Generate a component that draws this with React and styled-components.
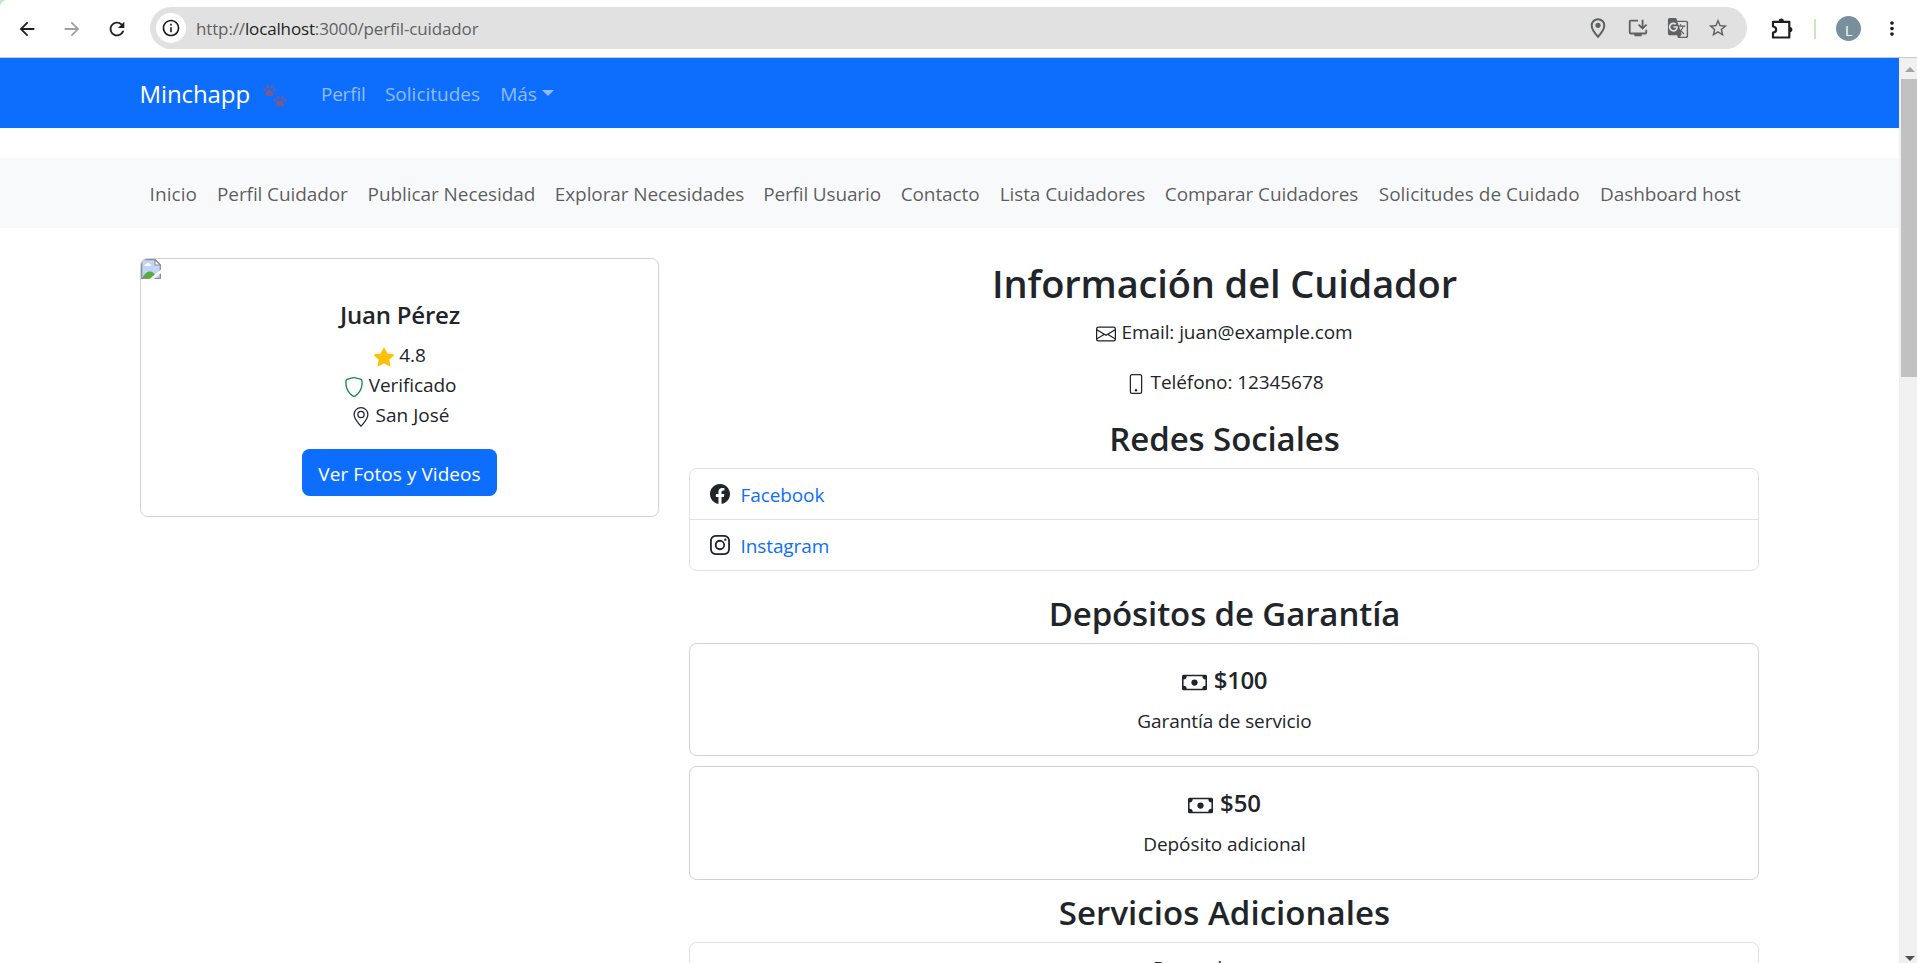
import React from 'react';
import styled, { createGlobalStyle, css } from 'styled-components';
import { BsStarFill, BsShield, BsGeoAlt, BsEnvelope, BsPhone, BsFacebook, BsInstagram, BsCash } from 'react-icons/bs';
import { MdArrowBack, MdArrowForward, MdRefresh, MdOutlineInfo, MdInstallDesktop, MdGTranslate, MdStarBorder, MdMoreVert } from 'react-icons/md';

const Global = createGlobalStyle`
  * { box-sizing: border-box; }
  body {
    margin: 0;
    overflow: hidden;
    background: #fff;
    color: #212529;
    font: 400 19px/30px "Open Sans", "Noto Sans", sans-serif;
    letter-spacing: -0.1px;
  }
`;

const Window = styled.div`
  display: flex;
  flex-direction: column;
  height: 963px;
  overflow: hidden;
`;

/* browser toolbar */
const Toolbar = styled.header`
  flex: none;
  display: flex;
  align-items: center;
  height: 58px;
  padding: 0 14px 0 16px;
  border-bottom: 1px solid #c8cacd;
  background: radial-gradient(circle at 9px 9px, #fff 9px, #c6e9bd 10px) 0 0 / 9px 9px no-repeat #fff;
  color: #1f1f1f;
`;
const ToolIcon = styled.span`
  display: flex;
  justify-content: center;
  width: ${(p) => p.$w || 22}px;
  margin-right: ${(p) => p.$gap || 0}px;
  padding-left: ${(p) => p.$inset || 0}px;
  color: ${(p) => p.$color || 'inherit'};
  font-size: ${(p) => p.$size || 22}px;
`;
const Address = styled.div`
  flex: 1;
  display: flex;
  align-items: center;
  height: 42px;
  margin-top: -1px;
  padding: 0 18px 0 6px;
  border-radius: 21px;
  background: #e1e1e1;
`;
const SiteInfo = styled.span`
  display: grid;
  place-items: center;
  width: 30px;
  height: 30px;
  margin-right: 10px;
  border-radius: 50%;
  background: #fff;
  font-size: 20px;
`;
const Url = styled.span`
  flex: 1;
  padding-top: 1px;
  color: #5f6163;
  font-size: 17px;
  letter-spacing: -0.14px;
  b { color: #1f1f1f; font-weight: 400; }
`;
const Divider = styled.span`
  width: 2px;
  height: 20px;
  margin-right: 20px;
  background: #c6e9bd;
`;
const Avatar = styled.span`
  display: grid;
  place-items: center;
  width: 25px;
  height: 25px;
  margin-right: 20px;
  border-radius: 50%;
  background: #78909c;
  color: #fff;
  font-size: 14px;
`;

/* viewport and scrollbar */
const Viewport = styled.div`
  flex: 1;
  display: flex;
  min-height: 0;
`;
const Page = styled.div`
  flex: 1;
  overflow: hidden;
`;
const Scrollbar = styled.div`
  flex: none;
  display: flex;
  flex-direction: column;
  align-items: center;
  width: 18px;
  background: #f0f0f0;
`;
const Thumb = styled.div`
  align-self: flex-end;
  width: 16px;
  height: 298px;
  margin-bottom: auto;
  background: #c1c1c1;
`;
const ScrollArrow = styled.span`
  width: 0;
  height: 0;
  margin: ${(p) => (p.$down ? '0 0 2px 3px' : '9px 0 7px 3px')};
  border: 5px solid transparent;
  ${(p) => (p.$down
    ? css`border-top-color: #505050; border-bottom: 0;`
    : css`border-bottom-color: #a3a3a3; border-top: 0;`)}
`;

const Bar = styled.nav`
  height: 70px;
  margin-bottom: 30px;
  background: ${(p) => p.$bg};
`;
const Container = styled.div`
  display: flex;
  align-items: center;
  width: 1650px;
  height: 100%;
  margin: 0 auto;
  padding: 2px 15px 0;
`;
const Brand = styled.a`
  display: flex;
  align-items: center;
  width: 172.5px;
  color: #fff;
  font-size: 24px;
  letter-spacing: -0.1px;
  svg { margin: 5px 0 0 13px; }
`;
const NavLink = styled.a`
  display: flex;
  align-items: center;
  justify-content: center;
  width: ${(p) => p.$w}px;
  color: ${(p) => (p.$light ? 'rgba(255,255,255,.55)' : 'rgba(0,0,0,.65)')};
  letter-spacing: ${(p) => p.$ls ?? -0.1}px;
  white-space: nowrap;
`;
const Caret = styled.span`
  margin: -3px 0 0 5px;
  border: 6px solid transparent;
  border-top-color: currentColor;
  border-bottom: 0;
`;

const Columns = styled.main`
  display: grid;
  grid-template-columns: 519px 1070px;
  column-gap: 30px;
  align-items: start;
  width: 1619px;
  margin: 0 auto;
  text-align: center;
`;
const Card = styled.section`
  height: ${(p) => p.$h}px;
  margin-bottom: 10px;
  border: 1px solid #d0d1d2;
  border-radius: 7.5px;
`;
const CardBody = styled.div`
  padding: 20px;
`;
const MissingPhoto = styled.div`
  height: 20px;
  overflow: hidden;
  border-radius: 6px 0 0 0;
  line-height: 0;
  text-align: left;
`;
const Title = styled.h2`
  height: ${(p) => p.$h}px;
  margin: ${(p) => p.$top || 0}px 0 10px;
  padding: 1px 0 0 1px;
  font-size: ${(p) => p.$size}px;
  font-weight: 560;
  line-height: ${(p) => p.$h}px;
  letter-spacing: ${(p) => p.$ls || 0}px;
`;
const SectionTitle = styled(Title).attrs({ as: 'h3', $size: 33, $h: 42 })`
  padding-top: 2px;
`;
const Line = styled.p`
  height: 30px;
  margin: 0 0 ${(p) => p.$gap || 0}px;
  padding: ${(p) => (p.$low ? 2 : 1)}px 0 0 1px;
  letter-spacing: ${(p) => p.$ls ?? -0.08}px;
`;
const Glyph = styled.span`
  display: inline-block;
  width: ${(p) => p.$size || 20}px;
  height: ${(p) => p.$size || 20}px;
  margin-right: ${(p) => p.$gap ?? 5}px;
  color: ${(p) => p.$color || 'inherit'};
  font-size: ${(p) => p.$size || 20}px;
  line-height: 0;
  vertical-align: middle;
`;
const Button = styled.button`
  width: 195px;
  height: 47px;
  margin-top: 20px;
  padding: 2px 0 0;
  border: 0;
  border-radius: 7.5px;
  background: #0d6efd;
  color: #fff;
  font: inherit;
  letter-spacing: 0.05px;
  white-space: nowrap;
`;
const List = styled.ul`
  margin: 0;
  padding: 0;
  border: 1px solid #dee2e6;
  border-radius: 7.5px;
  list-style: none;
`;
const ListItem = styled.li`
  display: flex;
  align-items: center;
  justify-content: ${(p) => (p.$center ? 'center' : 'flex-start')};
  height: 50px;
  padding: 0 20px;
  & + & { height: 51px; border-top: 1px solid #dee2e6; }
`;
const Link = styled.a`
  padding-top: 2px;
  color: #0d6efd;
`;

const Paws = () => (
  <svg width="25" height="24" viewBox="0 0 25 24" fill="#735b93">
    {[[0, 0], [10.5, 10.5]].map(([x, y]) => (
      <g key={x} transform={`translate(${x} ${y}) scale(.93)`}>
        <ellipse cx="1.800" cy="5" rx="1.500" ry="1.800" />
        <ellipse cx="5" cy="2.200" rx="1.500" ry="1.800" />
        <ellipse cx="9.200" cy="2.200" rx="1.500" ry="1.800" />
        <ellipse cx="12.400" cy="5" rx="1.500" ry="1.800" />
        <path d="M7.100 5.200C4.500 5.200 2.600 8 2.800 10.200c.2 1.900 2 1.700 4.300 1.700s4.100.2 4.300-1.700c.2-2.200-1.700-5-4.300-5z" />
      </g>
    ))}
  </svg>
);
const Pin = () => (
  <svg width="16" height="21" viewBox="0 0 16 21" fill="none" stroke="#5f6163" strokeWidth="2">
    <path d="M8 1.200a6.300 6.300 0 0 0-6.300 6.300C1.700 12 8 18.800 8 18.800S14.300 12 14.300 7.500A6.300 6.300 0 0 0 8 1.200z" />
    <circle cx="8" cy="7.300" r="2.600" fill="#5f6163" stroke="none" />
  </svg>
);
const Puzzle = () => (
  <svg width="22" height="22" viewBox="0 0 22 22" fill="none" stroke="#1f1f1f" strokeWidth="2.200" strokeLinejoin="round">
    <path d="M2 3.800h16.300v15.700H2v-4.800c4.200-.4 4.200-5.800 0-6.200z" />
    <path d="M7.700 3.200a2.600 2.600 0 0 1 5.200 0zM18.800 9a2.600 2.600 0 0 1 0 5.200z" fill="#1f1f1f" stroke="none" />
  </svg>
);
const BrokenImage = () => (
  <svg width="20" height="20" viewBox="0 0 20 20">
    <path d="M.7.7H14l5.300 5.300v13.300H.7z" fill="#c3d5f8" stroke="#8f8f8f" strokeWidth="1.300" />
    <path d="M14 .7V6h5.300z" fill="#fff" stroke="#8f8f8f" strokeWidth="1.200" />
    <path d="M3.500 7c0-2 2-2 2.500-2.500 1.500-1 3 0 3 1 1.500 0 1.500 1.500.5 1.500z" fill="#fff" />
    <path d="M1.400 19c2-4 4-6.500 7.600-6.500 3 0 5 2.500 6 6.500z" fill="#57ab3c" />
    <path d="M8.500 20 20 10.500V14l-7 6z" fill="#fff" />
  </svg>
);

const navItems = [
  ['Inicio', 67.6, 0.05], ['Perfil Cuidador', 150.6], ['Publicar Necesidad', 187.6, -0.07], ['Explorar Necesidades', 208.6],
  ['Perfil Usuario', 136.3, -0.15], ['Contacto', 99.9], ['Lista Cuidadores', 164.9], ['Comparar Cuidadores', 213.1],
  ['Solicitudes de Cuidado', 222.3, 0], ['Dashboard host', 160],
];
const deposits = [
  { amount: '$100', label: 'Garantía de servicio', ls: -0.4, h: 113 },
  { amount: '$50', label: 'Depósito adicional', ls: 0, h: 114 },
];

export default function App() {
  return (
    <Window>
      <Global />
      <Toolbar>
        <ToolIcon $gap={23}><MdArrowBack /></ToolIcon>
        <ToolIcon $gap={23} $color="#a0a0a0"><MdArrowForward /></ToolIcon>
        <ToolIcon $gap={22} $size={24}><MdRefresh /></ToolIcon>
        <Address>
          <SiteInfo><MdOutlineInfo /></SiteInfo>
          <Url>http://<b>localhost</b>:3000/perfil-cuidador</Url>
          <ToolIcon $gap={18}><Pin /></ToolIcon>
          <ToolIcon $gap={18} $color="#5f6163"><MdInstallDesktop /></ToolIcon>
          <ToolIcon $gap={18} $color="#5f6163"><MdGTranslate /></ToolIcon>
          <ToolIcon $color="#5f6163"><MdStarBorder /></ToolIcon>
        </Address>
        <ToolIcon $w={67} $inset={2}><Puzzle /></ToolIcon>
        <Divider />
        <Avatar>L</Avatar>
        <ToolIcon $size={25}><MdMoreVert /></ToolIcon>
      </Toolbar>
      <Viewport>
        <Page>
          <Bar $bg="#0d6efd">
            <Container>
              <Brand>Minchapp <Paws /></Brand>
              <NavLink $light $w={62.5} $ls={-0.2}>Perfil</NavLink>
              <NavLink $light $w={116} $ls={0}>Solicitudes</NavLink>
              <NavLink $light $w={73}>Más<Caret /></NavLink>
            </Container>
          </Bar>
          <Bar $bg="#f8f9fa">
            <Container>
              {navItems.map(([label, w, ls]) => <NavLink key={label} $w={w} $ls={ls}>{label}</NavLink>)}
            </Container>
          </Bar>
          <Columns>
            <Card $h={259}>
              <MissingPhoto><BrokenImage /></MissingPhoto>
              <CardBody>
                <Title as="h5" $size={24} $h={30} $ls={-0.2}>Juan Pérez</Title>
                <Line><Glyph $color="#ffc107"><BsStarFill /></Glyph>4.8</Line>
                <Line><Glyph $color="#198754"><BsShield /></Glyph>Verificado</Line>
                <Line $ls={0}><Glyph><BsGeoAlt /></Glyph>San José</Line>
                <Button>Ver Fotos y Videos</Button>
              </CardBody>
            </Card>
            <div>
              <Title $size={38} $h={48} $ls={-0.12}>Información del Cuidador</Title>
              <Line $gap={20}><Glyph><BsEnvelope /></Glyph>Email: juan@example.com</Line>
              <Line $gap={20}><Glyph><BsPhone /></Glyph>Teléfono: 12345678</Line>
              <SectionTitle $ls={-0.08}>Redes Sociales</SectionTitle>
              <List>
                <ListItem><Glyph $gap={10.5}><BsFacebook /></Glyph><Link>Facebook</Link></ListItem>
                <ListItem><Glyph $gap={10.5}><BsInstagram /></Glyph><Link>Instagram</Link></ListItem>
              </List>
              <SectionTitle $top={20} $ls={-0.11}>Depósitos de Garantía</SectionTitle>
              {deposits.map(({ amount, label, ls, h }) => (
                <Card key={amount} $h={h}>
                  <CardBody>
                    <Title as="h5" $size={24} $h={30} $ls={ls}><Glyph $size={25} $gap={7}><BsCash /></Glyph>{amount}</Title>
                    <Line $low $ls={-0.07}>{label}</Line>
                  </CardBody>
                </Card>
              ))}
              <SectionTitle $top={10} $ls={0.05}>Servicios Adicionales</SectionTitle>
              <List>
                <ListItem $center>Paseo de perros</ListItem>
              </List>
            </div>
          </Columns>
        </Page>
        <Scrollbar>
          <ScrollArrow />
          <Thumb />
          <ScrollArrow $down />
        </Scrollbar>
      </Viewport>
    </Window>
  );
}
